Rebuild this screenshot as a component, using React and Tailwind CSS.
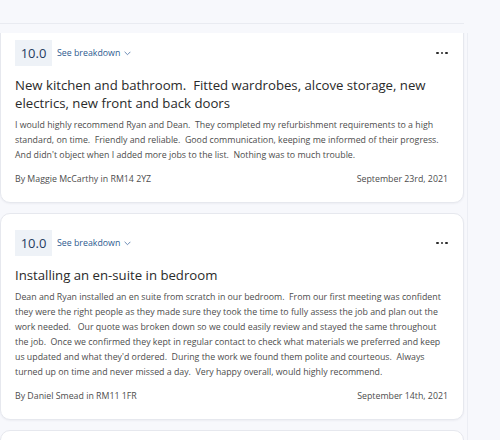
import React from 'react';

const reviews = [
    {
        id: 1,
        score: '10.0',
        title: 'New kitchen and bathroom.  Fitted wardrobes, alcove storage, new electrics, new front and back doors',
        body: "I would highly recommend Ryan and Dean.  They completed my refurbishment requirements to a high standard, on time.  Friendly and reliable.  Good communication, keeping me informed of their progress.  And didn't object when I added more jobs to the list.  Nothing was to much trouble.",
        author: 'By Maggie McCarthy in RM14 2YZ',
        date: 'September 23rd, 2021',
    },
    {
        id: 2,
        score: '10.0',
        title: 'Installing an en-suite in bedroom',
        body: "Dean and Ryan installed an en suite from scratch in our bedroom.  From our first meeting was confident they were the right people as they made sure they took the time to fully assess the job and plan out the work needed.   Our quote was broken down so we could easily review and stayed the same throughout the job.  Once we confirmed they kept in regular contact to check what materials we preferred and keep us updated and what they'd ordered.  During the work we found them polite and courteous.  Always turned up on time and never missed a day.  Very happy overall, would highly recommend.",
        author: 'By Daniel Smead in RM11 1FR',
        date: 'September 14th, 2021',
    },
];

const ReviewCard = ({ review }) => (
    <div className="bg-white border border-[#e6e8ee] rounded-[10px] shadow-[0_1px_2px_rgba(30,40,80,0.05)] pl-[14px] pr-[15px] pt-[16px] pb-[15px]">
        <div className="flex items-center justify-between">
            <div className="flex items-center gap-[5px]">
                <span className="bg-[#eef2f7] text-[#1f3b5e] text-[13px] leading-[26px] h-[26px] w-[37px] text-center">
                    {review.score}
                </span>
                <button className="flex items-center gap-[4px] text-[8.8px] leading-[12px] text-[#2d5a8f]">
                    See breakdown
                    <svg width="7" height="5" viewBox="0 0 7 5" fill="none">
                        <path d="M0.6 0.8l2.9 2.9L6.4 0.8" stroke="#5b7fae" strokeWidth="0.9" />
                    </svg>
                </button>
            </div>
            <div className="flex gap-[2px]">
                <span className="w-[2.6px] h-[2.6px] rounded-full bg-[#2a2a2a]" />
                <span className="w-[2.6px] h-[2.6px] rounded-full bg-[#2a2a2a]" />
                <span className="w-[2.6px] h-[2.6px] rounded-full bg-[#2a2a2a]" />
            </div>
        </div>
        <h3 className="mt-[10px] text-[13.2px] leading-[18px] font-medium text-[#2a2a2a] whitespace-pre-wrap">
            {review.title}
        </h3>
        <p className="mt-[6px] text-[8.8px] leading-[15px] text-[#4d4d4d] whitespace-pre-wrap">
            {review.body}
        </p>
        <div className="mt-[9px] flex justify-between text-[8.8px] leading-[15px] text-[#4d4d4d]">
            <span>{review.author}</span>
            <span>{review.date}</span>
        </div>
    </div>
);

const App = () => {
    return (
        <div className="w-[500px] h-[440px] overflow-hidden bg-[#f7f8fc] font-['Open_Sans',sans-serif]">
            <div className="w-[464px] h-[24px] border-b border-[#e9ebf1]" />
            <div className="mt-[9px] w-[468px] h-[407px] overflow-hidden border-r border-[#eceef4]">
                <div className="-mt-[10px] w-[464px] flex flex-col gap-[10px]">
                    {reviews.map((r) => (
                        <ReviewCard key={r.id} review={r} />
                    ))}
                    <div className="bg-white border border-[#e6e8ee] rounded-[10px] h-[60px]" />
                </div>
            </div>
        </div>
    );
};

export default App;
